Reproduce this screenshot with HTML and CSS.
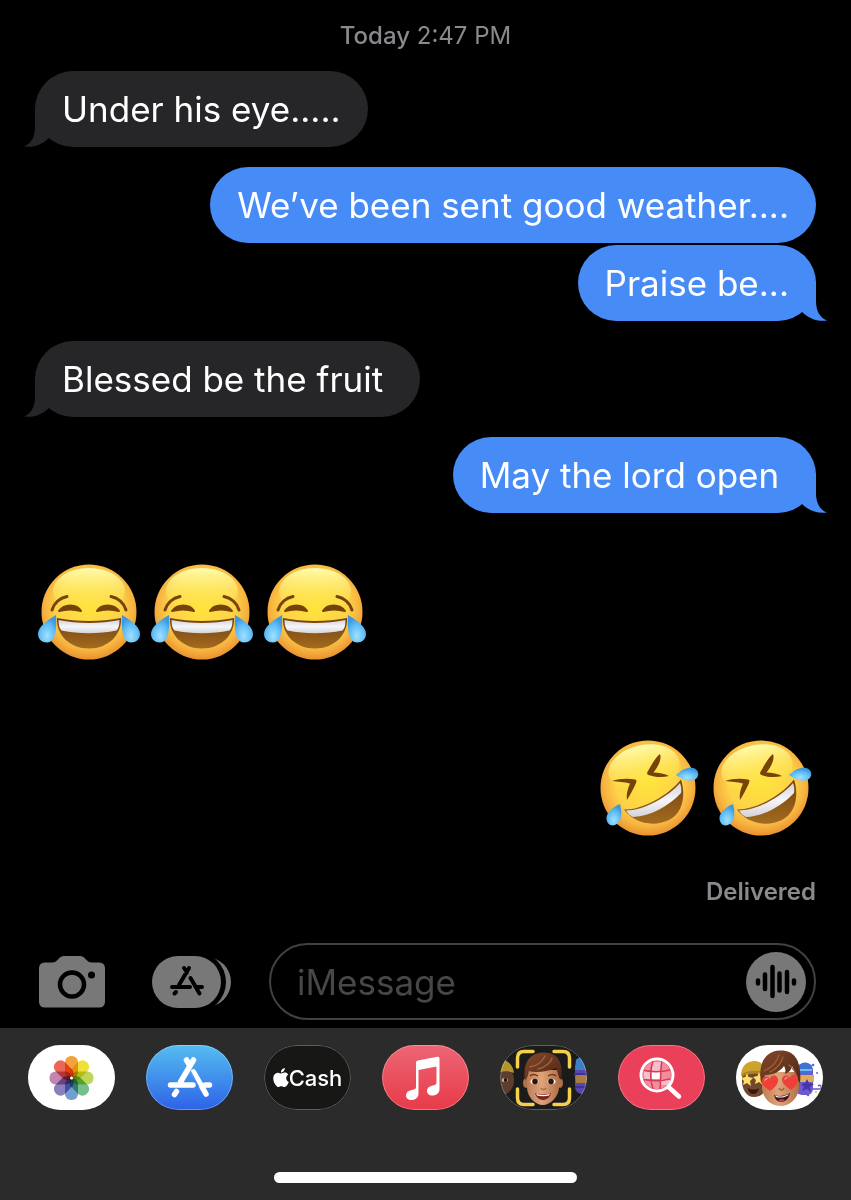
FILE: index.html
```
<!DOCTYPE html>
<html lang="en">
<head>
    <meta charset="UTF-8">
    <meta name="viewport" content="width=device-width, initial-scale=1.0">
    <title>Messages</title>
    <link rel="stylesheet" href="styles.css">
</head>
<body>

    <!-- shared shapes -->
    <svg class="defs" width="0" height="0" aria-hidden="true">
        <defs>
            <radialGradient id="face" cx="50%" cy="44%" r="57%">
                <stop offset="0" stop-color="#ffe33c"/>
                <stop offset="0.6" stop-color="#fdd348"/>
                <stop offset="0.82" stop-color="#f7b340"/>
                <stop offset="1" stop-color="#e78e2c"/>
            </radialGradient>
            <linearGradient id="shine" x1="0" y1="0" x2="0" y2="1">
                <stop offset="0" stop-color="#fffcae"/>
                <stop offset="1" stop-color="#ffe83a" stop-opacity="0"/>
            </linearGradient>
            <linearGradient id="mouth" x1="0" y1="0" x2="0" y2="1">
                <stop offset="0" stop-color="#74410d"/>
                <stop offset="1" stop-color="#a26b20"/>
            </linearGradient>
            <linearGradient id="teeth" x1="0" y1="0" x2="0" y2="1">
                <stop offset="0" stop-color="#d4d3d8"/>
                <stop offset="0.5" stop-color="#f6f6fa"/>
                <stop offset="1" stop-color="#d3d2d8"/>
            </linearGradient>
            <radialGradient id="tear" cx="50%" cy="76%" r="66%">
                <stop offset="0" stop-color="#a0e0ff"/>
                <stop offset="0.6" stop-color="#62bff6"/>
                <stop offset="1" stop-color="#3d98df"/>
            </radialGradient>
            <linearGradient id="store" x1="0" y1="0" x2="0" y2="1">
                <stop offset="0" stop-color="#55bdf0"/>
                <stop offset="1" stop-color="#2d62e8"/>
            </linearGradient>
            <linearGradient id="hair" x1="0" y1="0" x2="1" y2="1">
                <stop offset="0" stop-color="#84492a"/>
                <stop offset="1" stop-color="#4c2616"/>
            </linearGradient>
            <linearGradient id="skin" x1="0" y1="0" x2="1" y2="0">
                <stop offset="0" stop-color="#bd7d54"/>
                <stop offset="0.45" stop-color="#dfa47a"/>
                <stop offset="1" stop-color="#b07048"/>
            </linearGradient>

            <symbol id="tail" viewBox="0 0 36 40">
                <path d="M11 0V20C11 30 7 37 0 39.5C10 41 19 37 25 31L36 0Z" fill="currentColor"/>
            </symbol>

            <symbol id="joy" viewBox="0 0 113 96">
                <circle cx="54" cy="48" r="47.5" fill="url(#face)"/>
                <ellipse cx="54" cy="27" rx="36" ry="23" fill="url(#shine)"/>
                <path d="M17 46C19 39 25 34 32 32.5M91 46C89 39 83 34 76 32.5" fill="none" stroke="#764309" stroke-width="3" stroke-linecap="round"/>
                <path d="M24 47C29 39.5 42 39.5 46 47C39 45 31 45 24 47Z" fill="#764309" stroke="#764309" stroke-width="2" stroke-linejoin="round"/>
                <path d="M62 47C66 39.5 79 39.5 84 47C77 45 69 45 62 47Z" fill="#764309" stroke="#764309" stroke-width="2" stroke-linejoin="round"/>
                <path d="M22 54C42 58 66 58 86 54C87 71 73 84.5 54 84.5C35 84.5 21 71 22 54Z" fill="url(#mouth)"/>
                <path d="M23.5 56C43 60 65 60 84.5 56C84.5 61 83.5 64.5 81.5 66.5C64 70 44 70 26.5 66.5C24.5 64.5 23.5 61 23.5 56Z" fill="url(#teeth)"/>
                <path d="M21 51C11 57 3 63 3 70C3 75 7 78.5 12 78.5C20 78.5 22 66 21 51Z" fill="url(#tear)"/>
                <path d="M87 51C97 57 105 63 105 70C105 75 101 78.5 96 78.5C88 78.5 86 66 87 51Z" fill="url(#tear)"/>
            </symbol>

            <symbol id="rofl" viewBox="0 0 113 96">
                <circle cx="58" cy="48" r="47.5" fill="url(#face)"/>
                <ellipse cx="54" cy="28" rx="36" ry="23" transform="rotate(-12 54 28)" fill="url(#shine)"/>
                <path d="M22 41C29 38.5 38 38 45 39.5C47 40 46.5 42 46 43C43.5 49 40.5 54 37 60C36 55 37.5 49 40 43.5C34 42 28 41.5 22 41Z" fill="#764309"/>
                <path d="M70 14C72 19 68 27 63.5 32.5C69 32.5 75 34 79 36C72 38 64 37 58.5 35C56.5 34 57 32.5 58 31C61.5 25 65 18 70 14Z" fill="#764309"/>
                <path d="M34 69.5C52 70 78 56 91 39.5C96 55 93 73 79 80C62 88 43 82 34 69.5Z" fill="url(#mouth)"/>
                <path d="M36 70.5C54 70.5 78 57 90 43C91.5 47 91.5 50 91 53C79 66 61 76 43 77C40 75.5 37.5 73 36 70.5Z" fill="url(#teeth)"/>
                <path d="M30 64C21 68 16 74 16.5 79C17 84 21 86.5 25 85C32 82.5 32.5 73 30 64Z" fill="url(#tear)"/>
                <path d="M86 35C93 28 101 26 105.5 29C109.5 32 109 37 105 39.5C99 42.5 92 39.5 86 35Z" fill="url(#tear)"/>
            </symbol>
        </defs>
    </svg>

    <main class="thread">
        <p class="stamp"><b>Today</b> 2:47 PM</p>

        <div class="bubble received">Under his eye.....<svg class="tail"><use href="#tail"/></svg></div>
        <div class="bubble sent">We’ve been sent good weather....</div>
        <div class="bubble sent follow">Praise be...<svg class="tail"><use href="#tail"/></svg></div>
        <div class="bubble received">Blessed be the fruit&nbsp;<svg class="tail"><use href="#tail"/></svg></div>
        <div class="bubble sent">May the lord open&nbsp;<svg class="tail"><use href="#tail"/></svg></div>

        <div class="emojis">
            <svg class="emoji" role="img" aria-label="Face with tears of joy"><use href="#joy"/></svg>
            <svg class="emoji" role="img" aria-label="Face with tears of joy"><use href="#joy"/></svg>
            <svg class="emoji" role="img" aria-label="Face with tears of joy"><use href="#joy"/></svg>
        </div>
        <div class="emojis mine">
            <svg class="emoji" role="img" aria-label="Rolling on the floor laughing"><use href="#rofl"/></svg>
            <svg class="emoji" role="img" aria-label="Rolling on the floor laughing"><use href="#rofl"/></svg>
        </div>

        <p class="status">Delivered</p>
    </main>

    <form class="composer">
        <button type="button" class="tool" aria-label="Camera">
            <svg width="66" height="52" viewBox="0 0 66 52">
                <path d="M6 6.5H13C16 6.5 17 5.5 19 3.5C21 1.500 22 0 26 0H40C44 0 45 1.500 47 3.5C49 5.5 50 6.5 53 6.5H60Q66 6.5 66 12.5V45.5Q66 51.5 60 51.5H6Q0 51.5 0 45.5V12.5Q0 6.5 6 6.5Z" fill="#787878"/>
                <circle cx="33" cy="28.5" r="12" fill="none" stroke="#000" stroke-width="4.5"/>
                <circle cx="52.5" cy="19" r="3.5" fill="#000"/>
            </svg>
        </button>
        <button type="button" class="tool" aria-label="Apps">
            <svg width="80" height="52" viewBox="0 0 80 52">
                <rect x="20" y="1" width="59" height="50" rx="25" fill="#787878"/>
                <rect x="-4" y="-4" width="78" height="60" rx="30" fill="#000"/>
                <rect width="69" height="52" rx="26" fill="#787878"/>
                <path d="M37 12L27 29M32 12L35 16.5M20 31H38M45 31H50M38.5 22L47.5 37.5M24 36L22.5 37.5" fill="none" stroke="#000" stroke-width="4" stroke-linecap="round"/>
            </svg>
        </button>
        <div class="field">
            <input type="text" class="message" placeholder="iMessage" aria-label="iMessage">
            <button type="button" class="audio" aria-label="Record audio">
                <svg width="60" height="60" viewBox="0 0 60 60">
                    <circle cx="30" cy="30" r="30" fill="#787878"/>
                    <path d="M12 28.5V31.5M19 22.5V37M26.5 15V44M33.5 21.5V38.5M41 20V40M48 28.5V31.5" stroke="#000" stroke-width="4.5" stroke-linecap="round"/>
                </svg>
            </button>
        </div>
    </form>

    <footer class="drawer">
        <nav class="apps">
            <button class="app white" aria-label="Photos">
                <svg viewBox="0 0 87 65">
                    <g class="petals">
                        <rect x="37" y="11" width="13" height="22" rx="6" fill="#f3a23c"/>
                        <rect x="37" y="11" width="13" height="22" rx="6" fill="#efe13a" transform="rotate(45 43.5 33)"/>
                        <rect x="37" y="11" width="13" height="22" rx="6" fill="#bdd65a" transform="rotate(90 43.5 33)"/>
                        <rect x="37" y="11" width="13" height="22" rx="6" fill="#74bf8d" transform="rotate(135 43.5 33)"/>
                        <rect x="37" y="11" width="13" height="22" rx="6" fill="#729fd3" transform="rotate(180 43.5 33)"/>
                        <rect x="37" y="11" width="13" height="22" rx="6" fill="#8d7ebd" transform="rotate(225 43.5 33)"/>
                        <rect x="37" y="11" width="13" height="22" rx="6" fill="#c384ae" transform="rotate(270 43.5 33)"/>
                        <rect x="37" y="11" width="13" height="22" rx="6" fill="#ec6655" transform="rotate(315 43.5 33)"/>
                    </g>
                    <circle cx="43.5" cy="33" r="1.5" fill="#fff"/>
                </svg>
            </button>

            <button class="app" aria-label="App Store">
                <svg viewBox="0 0 87 65">
                    <rect width="87" height="65" fill="url(#store)"/>
                    <path d="M47.5 15L34.5 37M40.5 15L43.5 20M24.5 40H47M59 40H63.5M47.5 27L60 49M30.5 46.5L28.5 49.5" fill="none" stroke="#fff" stroke-width="5.5" stroke-linecap="round"/>
                    <path d="M44.5 26L53 42" fill="none" stroke="#3d8bec" stroke-width="1"/>
                </svg>
            </button>

            <button class="app cash">
                <svg width="16" height="19" viewBox="2 0 20 24"><path fill="#fff" d="M12.152 6.896c-.948 0-2.415-1.078-3.96-1.04-2.04.027-3.91 1.183-4.961 3.014-2.117 3.675-.546 9.103 1.519 12.09 1.013 1.454 2.208 3.09 3.792 3.039 1.52-.065 2.09-.987 3.935-.987 1.831 0 2.35.987 3.96.948 1.637-.026 2.676-1.48 3.676-2.948 1.156-1.688 1.636-3.325 1.662-3.415-.039-.013-3.182-1.221-3.22-4.857-.026-3.04 2.48-4.494 2.597-4.559-1.429-2.09-3.623-2.324-4.39-2.376-2-.156-3.675 1.09-4.61 1.09zM15.53 3.83c.843-1.012 1.4-2.427 1.245-3.83-1.207.052-2.662.805-3.532 1.818-.78.896-1.454 2.338-1.273 3.714 1.338.104 2.715-.688 3.559-1.701"/></svg>
                <span>Cash</span>
            </button>

            <button class="app music" aria-label="Music">
                <svg viewBox="0 0 87 65">
                    <path d="M34 17.5Q34 15.8 35.7 15.5L55.5 11.8Q57.5 11.5 57.5 13.5V44C57.5 48 54.5 50.5 50.5 50.5C47 50.5 45 48.5 45 46C45 43 47.5 41 51 40.5C53.5 40 54.5 39.5 54.5 37V21.5L36.5 25V48.5C36.5 52.5 33.5 55 29.5 55C26 55 24 53 24 50.5C24 47.5 26.5 45.5 30 45C33 44.5 34 44 34 41.5Z" fill="#fff"/>
                </svg>
            </button>

            <button class="app dark" aria-label="Memoji">
                <svg viewBox="0 0 87 65">
                    <ellipse cx="2" cy="35" rx="12" ry="15" fill="#5d3d2b"/>
                    <path d="M0 14C8 15 13 20 14 28C10 26 5 26 0 27Z" fill="#b4942d"/>
                    <ellipse cx="5" cy="35" rx="3" ry="2" fill="#ddd"/>
                    <circle cx="5.5" cy="35" r="2" fill="#241410"/>
                    <rect x="75" y="15" width="14" height="34" rx="7" fill="#5a46a8"/>
                    <path d="M76 15C79 11 84 13 87 16V25H75Z" fill="#3d7fc4"/>
                    <path d="M75 31C79 29 84 29 87 31V38H76Z" fill="#a87c45"/>
                    <path d="M74 29H87M75 42H87" stroke="#3b3299" stroke-width="2"/>
                    <ellipse cx="26" cy="38" rx="3" ry="5" fill="#b07048"/>
                    <ellipse cx="60" cy="38" rx="3" ry="5" fill="#b07048"/>
                    <path d="M27 25H59V42C59 52 50 60 43 60C35 60 27 52 27 42Z" fill="url(#skin)"/>
                    <path d="M25 35C23 20 28 8 43 7.500C58 7 64 18 61 35C58 32 58 27 56 23C47 27 35 28 29 26C28 29 28 33 25 35Z" fill="url(#hair)"/>
                    <path d="M30 22C36 21 42 17 45 11M38 24C46 22 51 17 52 13" fill="none" stroke="#a4603a" stroke-width="1.5" stroke-linecap="round"/>
                    <path d="M30 31C32 29 35 29 38 31M48 31C51 29 54 29 56 31" fill="none" stroke="#6a3920" stroke-width="1.5"/>
                    <ellipse cx="34.5" cy="36.5" rx="4" ry="2.5" fill="#fff"/>
                    <ellipse cx="51.5" cy="36.5" rx="4" ry="2.5" fill="#fff"/>
                    <circle cx="35" cy="36.5" r="2.8" fill="#2c1610"/>
                    <circle cx="51" cy="36.5" r="2.8" fill="#2c1610"/>
                    <path d="M41 43C42 45 45 45 46 43" fill="none" stroke="#b36a43" stroke-width="1.5"/>
                    <path d="M35 48C40 50 46 50 51 48C50 53 46 55 43 55C39 55 36 52 35 48Z" fill="#7a2428"/>
                    <path d="M36 48.5C40 50.5 46 50.5 50 48.5L49 50.5C45 51.5 41 51.5 37 50.5Z" fill="#fff"/>
                    <path d="M17.5 22V13Q17.5 6.5 24 6.5H33M54 6.5H63Q69.5 6.5 69.5 13V22M69.5 44V53Q69.5 59.5 63 59.5H54M33 59.5H24Q17.5 59.5 17.5 53V44" fill="none" stroke="#f6cf4b" stroke-width="3.5" stroke-linecap="round"/>
                </svg>
            </button>

            <button class="app images" aria-label="Images">
                <svg viewBox="0 0 87 65">
                    <path d="M50.5 42L61 51.5" stroke="#fff" stroke-width="4.5" stroke-linecap="round"/>
                    <circle cx="39" cy="30" r="14" fill="#f08d9e"/>
                    <path d="M34 17H43V26H34ZM26 26H34V34H26ZM43 34H52V40H43Z" fill="#f8becb"/>
                    <path d="M34 26H43V34H34Z" fill="#fff"/>
                    <path d="M26 25.5C34 27 44 27 52 25M26 34.5C34 36 44 36 52 34M35 16C32 25 32 35 35 44M44 16C42 25 43 35 42 44" fill="none" stroke="#d93a54" stroke-width="1.5"/>
                    <circle cx="39" cy="30" r="16" fill="none" stroke="#fff" stroke-width="3"/>
                </svg>
            </button>

            <button class="app white" aria-label="Memoji Stickers">
                <svg viewBox="0 0 87 65">
                    <path d="M6 28H30V42C29 49 23 52 18 52C10 52 6 44 6 36Z" fill="#70482e"/>
                    <path d="M5 31C5 21 11 16 19 16C25 16 29 21 30 29C22 26 12 27 5 31Z" fill="#cba32d"/>
                    <path d="M6 29C13 25 23 25 30 28V31C22 28 13 28 6 32Z" fill="#a9831e"/>
                    <path d="M11 28L12.500 32L17 33L14 36L15 41L11 38L7 40L8 36L5 33L9.500 32ZM23 27L24.500 31L29 32L26 35L27 40L23 37L19 39L20 35L17 32L21.500 31Z" fill="#ffdf66"/>
                    <path d="M12 43C15 45 20 45 23 43C22 48 19 49 17 49C14 49 12 46 12 43Z" fill="#38180f"/>
                    <rect x="60" y="19" width="17" height="31" rx="6" fill="#7058d1"/>
                    <path d="M63 21C66 16 73 17 76 21V29H62Z" fill="#3e73cf"/>
                    <path d="M63 25H76" stroke="#76b9ec" stroke-width="2"/>
                    <rect x="62" y="30" width="16" height="7" fill="#e1ae55"/>
                    <path d="M71 34L73 38L78 39L74 42L75 47L71 44L66 46L68 42L65 39L69 38Z" fill="#4936ac"/>
                    <path d="M77 44H84C87 42 84 39 82 41" fill="none" stroke="#6954c7" stroke-width="1.5"/>
                    <g fill="#3f6ee8">
                        <circle cx="77" cy="20" r="1.3"/><circle cx="81" cy="28" r="1"/><circle cx="72" cy="50" r="1.3"/>
                    </g>
                    <circle cx="80" cy="47" r="1" fill="#edbd36"/>
                    <path d="M26 27H63V43C62 54 53 61 45 61C35 61 27 54 26 43Z" fill="url(#skin)"/>
                    <path d="M25 38C22 20 28 6 44 5.5C60 5 66 18 64 38C60 34 60 27 56 21C55 26 52 28 49 29C50 25 49 23 48 21C43 28 35 30 29 30C28 33 28 36 25 38Z" fill="url(#hair)"/>
                    <path d="M28 26C35 23 41 17 43 10M34 27C40 24 45 19 47 12M53 20C58 24 60 28 61 32" fill="none" stroke="#a05e38" stroke-width="1.3" stroke-linecap="round"/>
                    <path d="M43 43C44 46 47 46 48 43" fill="none" stroke="#a45f3d" stroke-width="1.5"/>
                    <path d="M34 46C27 42 25 38 26 35C27 31 31 30 34 34C36 29 41 30 42 34C43 39 38 43 34 46Z" fill="#ee4039"/>
                    <path d="M55 45C49 41 46 38 46 34C47 30 51 29 54 33C56 28 61 29 62 33C63 38 59 42 55 45Z" fill="#ee4039"/>
                    <path d="M29 35L31 33.5M49 34L51 32.5" stroke="#ff9a8f" stroke-width="1.5" stroke-linecap="round"/>
                    <path d="M38 50C43 52 49 51 54 48C53 54 49 57 45 57C41 57 39 54 38 50Z" fill="#431318"/>
                    <path d="M39 50.5C43 52.5 49 51.5 53 49L52 50.5C47 53 43 53 40 52Z" fill="#fff"/>
                    <path d="M42 56C43 54 47 54 49 55C47 57 44 57 42 56Z" fill="#b04a50"/>
                </svg>
            </button>
        </nav>
        <div class="home-bar"></div>
    </footer>

</body>
</html>
```

FILE: styles.css
```
* {
    box-sizing: border-box;
}
body {
    margin: 0;
    min-height: 100vh;
    display: flex;
    flex-direction: column;
    background-color: #000;
    color: white;
    font-family: Inter, "Liberation Sans", sans-serif;
}
button {
    padding: 0;
    border: none;
    background: none;
    cursor: pointer;
}
svg {
    display: block;
}
.defs {
    position: absolute;
}

/* conversation */
.thread {
    flex: 1;
    display: flex;
    flex-direction: column;
    padding: 21px 35px 0;
}
.stamp {
    margin: 0;
    text-align: center;
    font-size: 24px;
    line-height: 30px;
    color: #8a8a8e;
}
.stamp b {
    font-weight: 500;
}
.bubble {
    position: relative;
    margin-top: 20px;
    padding: 16px 27px;
    border-radius: 38px;
    font-size: 35px;
    line-height: 44px;
}
.received {
    align-self: flex-start;
    background-color: #262628;
}
.sent {
    align-self: flex-end;
    background-color: #478bf7;
}
.follow {
    margin-top: 2px;
}
.tail {
    position: absolute;
    bottom: 0;
    left: -11px;
    width: 36px;
    height: 40px;
    color: #262628;
}
.sent .tail {
    left: auto;
    right: -11px;
    color: #478bf7;
    transform: scaleX(-1);
}
.emojis {
    display: flex;
    margin-top: 51px;
}
.mine {
    justify-content: flex-end;
    margin-top: 80px;
}
.emoji {
    width: 113px;
    height: 96px;
}
.status {
    margin: 40px 0 0;
    text-align: right;
    font-size: 24px;
    line-height: 32px;
    font-weight: 600;
    color: #8a8a8e;
}

/* message box */
.composer {
    display: flex;
    align-items: center;
    padding: 0 35px 8px 39px;
}
.tool {
    margin-right: 47px;
}
.tool + .tool {
    margin-right: 37px;
}
.field {
    flex: 1;
    min-width: 0;
    display: flex;
    align-items: center;
    height: 77px;
    padding: 0 8px 0 26px;
    border: 2px solid #414143;
    border-radius: 39px;
}
.message {
    flex: 1;
    min-width: 0;
    padding: 0;
    border: none;
    outline: none;
    background: none;
    color: white;
    font-family: inherit;
    font-size: 35px;
}
.message::placeholder {
    color: #474749;
    opacity: 1;
}

/* app drawer */
.drawer {
    height: 172px;
    padding: 17px 28px;
    display: flex;
    flex-direction: column;
    justify-content: space-between;
    background-color: #2b2b2b;
}
.apps {
    display: flex;
    justify-content: space-between;
}
.app {
    position: relative;
    width: 87px;
    height: 65px;
    border-radius: 33px;
    overflow: hidden;
}
.app::after {
    content: "";
    position: absolute;
    inset: 0;
    border: 1px solid rgba(255, 255, 255, 0.3);
    border-radius: 33px;
}
.white {
    background-color: white;
}
.petals {
    isolation: isolate;
}
.petals rect {
    mix-blend-mode: multiply;
}
.cash {
    display: flex;
    align-items: center;
    justify-content: center;
    background-color: #171716;
    color: white;
    font-family: inherit;
    font-size: 22px;
    font-weight: 500;
}
.dark {
    background-color: #1b1b1b;
}
.music {
    background: linear-gradient(#ec6675, #e83a48);
}
.images {
    background-color: #ea4059;
}
.home-bar {
    align-self: center;
    width: 38%;
    min-width: 140px;
    height: 11px;
    border-radius: 6px;
    background-color: white;
}
```
